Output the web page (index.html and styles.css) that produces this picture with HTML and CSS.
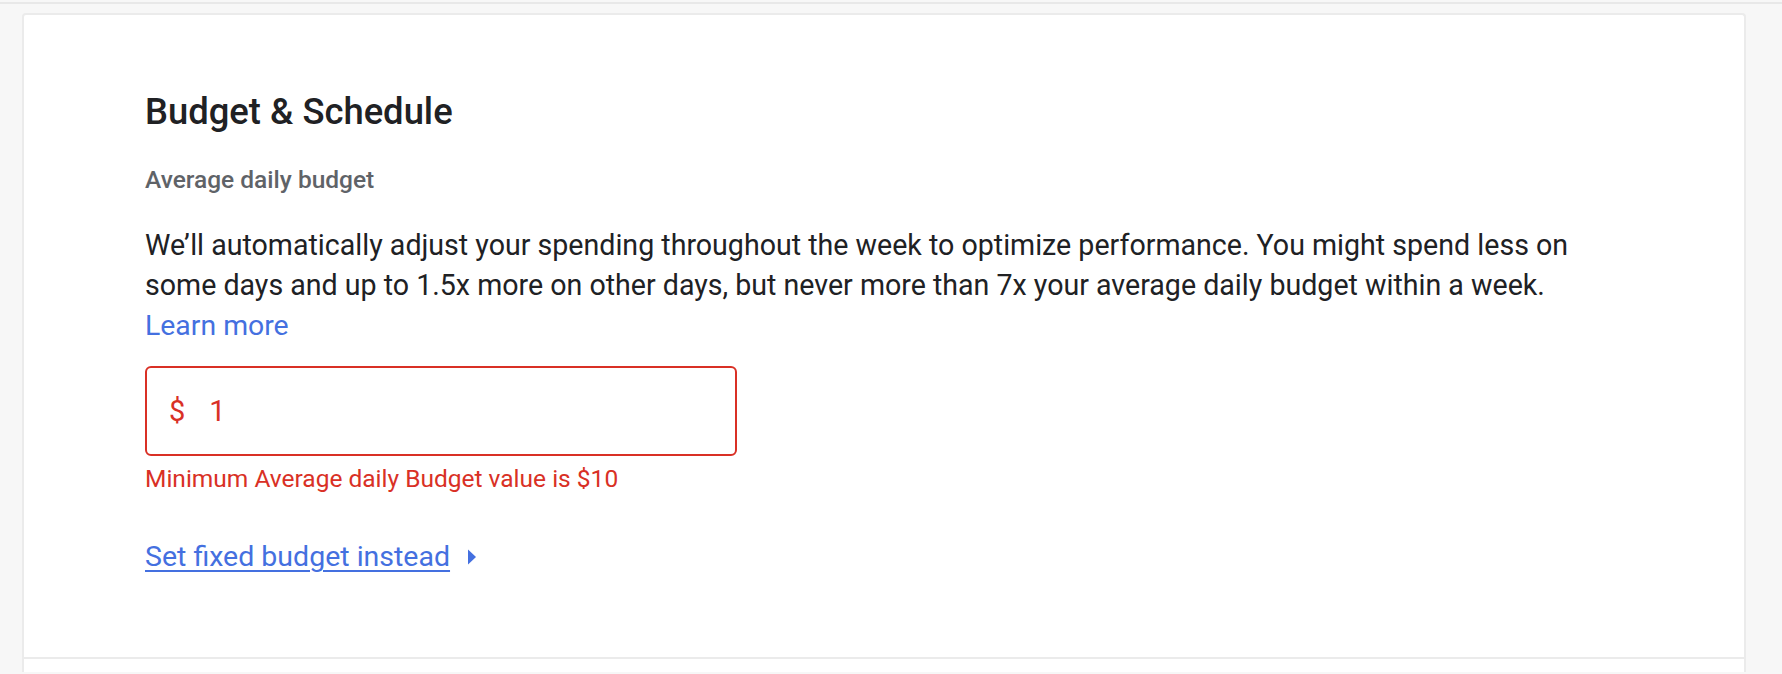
FILE: index.html
```html
<!DOCTYPE html>
<html lang="en">
<head>
<meta charset="utf-8">
<title>Budget &amp; Schedule</title>
<link rel="stylesheet" href="styles.css">
</head>
<body>
<div class="topbar"></div>
<main class="card">
  <section class="section">
    <h2 class="title">Budget &amp; Schedule</h2>
    <div class="label">Average daily budget</div>
    <p class="desc">We’ll automatically adjust your spending throughout the week to optimize performance. You might spend less on some days and up to 1.5x more on other days, but never more than 7x your average daily budget within a week. <br><a class="link" href="#">Learn more</a></p>
    <div class="field">
      <span class="currency">$</span>
      <span class="value">1</span>
    </div>
    <div class="error">Minimum Average daily Budget value is $10</div>
    <a class="toggle" href="#"><span class="toggle-text">Set fixed budget instead</span><svg class="caret" width="10" height="16" viewBox="0 0 10 16"><polygon points="1,0.5 9,8 1,15.5" fill="currentColor"/></svg></a>
  </section>
  <section class="next"></section>
</main>
</body>
</html>
```
FILE: styles.css
```css
html, body {
  margin: 0;
  padding: 0;
}
body {
  background: #f7f7f7;
  font-family: Roboto, "Liberation Sans", Arial, sans-serif;
  color: #202124;
  height: 674px;
  overflow: hidden;
}
.topbar {
  height: 2px;
  border-bottom: 2px solid #e8e8e8;
}
.card {
  margin: 9px 36px 0 22px;
  background: #fff;
  border: 2px solid #ebebeb;
  border-bottom: none;
  border-radius: 4px 4px 0 0;
}
.section {
  padding: 77px 121px 80px 121px;
}
.next {
  border-top: 2px solid #ebebeb;
  height: 13px;
}
.title {
  margin: 0;
  font-size: 36.4px;
  line-height: 40px;
  font-weight: 500;
  color: #202124;
}
.label {
  margin-top: 34px;
  font-size: 24.5px;
  line-height: 28px;
  font-weight: 500;
  color: #5f6368;
}
.desc {
  margin: 31px 0 0 0;
  max-width: 1425px;
  font-size: 28.6px;
  line-height: 40px;
  color: #202124;
}
.link {
  color: #4470e0;
  text-decoration: none;
  font-size: 28.4px;
}
.field {
  box-sizing: border-box;
  margin-top: 20px;
  width: 592px;
  height: 90px;
  border: 2px solid #d93025;
  border-radius: 6px;
  display: flex;
  align-items: center;
  padding-left: 22px;
  gap: 24px;
  color: #d93025;
  font-size: 29px;
}
.error {
  margin-top: 9px;
  font-size: 24.5px;
  line-height: 28px;
  color: #d93025;
}
.toggle {
  margin-top: 44px;
  display: flex;
  width: max-content;
  align-items: center;
  gap: 17px;
  font-size: 28.5px;
  line-height: 40px;
  color: #4470e0;
  text-decoration: none;
}
.toggle-text {
  text-decoration: underline;
  text-underline-offset: 4px;
  text-decoration-thickness: 2px;
}
.caret {
  display: block;
}
```
